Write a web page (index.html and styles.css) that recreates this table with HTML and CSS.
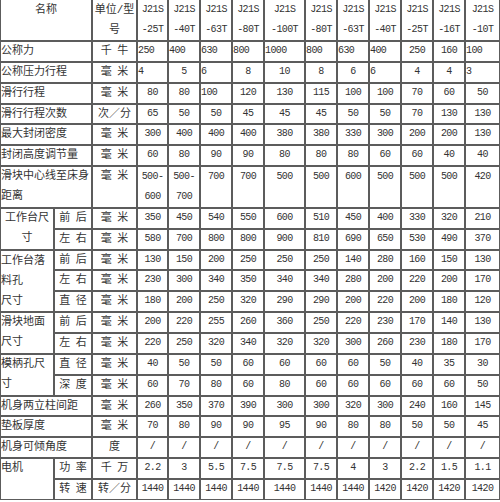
FILE: index.html
```html
<!DOCTYPE html>
<html lang="zh">
<head>
<meta charset="utf-8">
<title>J21S 技术参数</title>
<link rel="stylesheet" href="styles.css">
</head>
<body>
<table class="spec">
<colgroup>
<col class="w54"><col class="w38"><col class="w45"><col class="w31">
<col class="w32"><col class="w32"><col class="w32"><col class="w41">
<col class="w32"><col class="w32"><col class="w32"><col class="w32"><col class="w32"><col class="w35">
</colgroup>
<tr class="hd">
<th colspan="2" class="zh">名称</th><th class="zh">单位/型<br>号</th>
<th>J21S<br>-25T</th><th>J21S<br>-40T</th><th>J21S<br>-63T</th><th>J21S<br>-80T</th><th>J21S<br>-100T</th><th>J21S<br>-80T</th><th>J21S<br>-63T</th><th>J21S<br>-40T</th><th>J21S<br>-25T</th><th>J21S<br>-16T</th><th>J21S<br>-10T</th>
</tr>
<tr><td colspan="2" class="n">公称力</td><td class="zh">千&ensp;牛</td><td class="l">250</td><td class="l">400</td><td class="l">630</td><td class="l">800</td><td class="l">1000</td><td class="l">800</td><td class="l">630</td><td class="l">400</td><td>250</td><td>160</td><td class="l">100</td></tr>
<tr><td colspan="2" class="n">公称压力行程</td><td class="zh">毫&ensp;米</td><td class="l">4</td><td>5</td><td class="l">6</td><td>8</td><td>10</td><td>8</td><td>6</td><td class="l">6</td><td>4</td><td>4</td><td class="l">3</td></tr>
<tr><td colspan="2" class="n">滑行行程</td><td class="zh">毫&ensp;米</td><td>80</td><td>80</td><td class="l">100</td><td>120</td><td>130</td><td>115</td><td>100</td><td>100</td><td>70</td><td>60</td><td>50</td></tr>
<tr><td colspan="2" class="n">滑行行程次数</td><td class="zh">次／分</td><td>65</td><td>50</td><td>50</td><td>45</td><td>45</td><td>45</td><td>50</td><td>50</td><td>70</td><td>130</td><td>130</td></tr>
<tr><td colspan="2" class="n">最大封闭密度</td><td class="zh">毫&ensp;米</td><td>300</td><td>400</td><td>400</td><td>400</td><td>380</td><td>380</td><td>330</td><td>300</td><td>200</td><td>200</td><td>130</td></tr>
<tr><td colspan="2" class="n">封闭高度调节量</td><td class="zh">毫&ensp;米</td><td>60</td><td>80</td><td>90</td><td>90</td><td>80</td><td>80</td><td>80</td><td>60</td><td>60</td><td>40</td><td>40</td></tr>
<tr class="tall"><td colspan="2" class="n">滑块中心线至床身<br>距离</td><td class="zh">毫&ensp;米</td><td>500-<br>600</td><td>500-<br>700</td><td>700</td><td>700</td><td>500</td><td>500</td><td>600</td><td>500</td><td>500</td><td>500</td><td>420</td></tr>
<tr><td rowspan="2" class="n ctr rs2">工作台尺<br>寸</td><td class="zh">前&ensp;后</td><td class="zh">毫&ensp;米</td><td>350</td><td>450</td><td>540</td><td>550</td><td>600</td><td>510</td><td>450</td><td>400</td><td>330</td><td>320</td><td>210</td></tr>
<tr><td class="zh">左&ensp;右</td><td class="zh">毫&ensp;米</td><td>580</td><td>700</td><td>800</td><td>800</td><td>900</td><td>810</td><td>690</td><td>650</td><td>530</td><td>490</td><td>370</td></tr>
<tr><td rowspan="3" class="n rs3">工作台落<br>料孔<br>尺寸</td><td class="zh">前&ensp;后</td><td class="zh">毫&ensp;米</td><td>130</td><td>150</td><td>200</td><td>250</td><td>250</td><td>250</td><td>140</td><td>280</td><td>160</td><td>150</td><td>130</td></tr>
<tr><td class="zh">左&ensp;右</td><td class="zh">毫&ensp;米</td><td>230</td><td>300</td><td>340</td><td>350</td><td>340</td><td>340</td><td>280</td><td>200</td><td>220</td><td>200</td><td>170</td></tr>
<tr><td class="zh">直&ensp;径</td><td class="zh">毫&ensp;米</td><td>180</td><td>200</td><td>250</td><td>320</td><td>290</td><td>290</td><td>200</td><td>220</td><td>200</td><td>180</td><td>120</td></tr>
<tr><td rowspan="2" class="n rs2">滑块地面<br>尺寸</td><td class="zh">前&ensp;后</td><td class="zh">毫&ensp;米</td><td>200</td><td>220</td><td>255</td><td>260</td><td>360</td><td>250</td><td>220</td><td>230</td><td>170</td><td>140</td><td>130</td></tr>
<tr><td class="zh">左&ensp;右</td><td class="zh">毫&ensp;米</td><td>220</td><td>250</td><td>320</td><td>340</td><td>320</td><td>320</td><td>300</td><td>260</td><td>230</td><td>180</td><td>170</td></tr>
<tr><td rowspan="2" class="n rs2">模柄孔尺<br>寸</td><td class="zh">直&ensp;径</td><td class="zh">毫&ensp;米</td><td>40</td><td>50</td><td>50</td><td>60</td><td>60</td><td>60</td><td>60</td><td>50</td><td>40</td><td>35</td><td>30</td></tr>
<tr><td class="zh">深&ensp;度</td><td class="zh">毫&ensp;米</td><td>60</td><td>70</td><td>80</td><td>60</td><td>80</td><td>60</td><td>60</td><td>60</td><td>60</td><td>60</td><td>50</td></tr>
<tr><td colspan="2" class="n">机身两立柱间距</td><td class="zh">毫&ensp;米</td><td>260</td><td>350</td><td>370</td><td>390</td><td>300</td><td>300</td><td>320</td><td>300</td><td>240</td><td>160</td><td>145</td></tr>
<tr><td colspan="2" class="n">垫板厚度</td><td class="zh">毫&ensp;米</td><td>70</td><td>80</td><td>90</td><td>90</td><td>95</td><td>90</td><td>80</td><td>80</td><td>50</td><td>50</td><td>45</td></tr>
<tr><td colspan="2" class="n">机身可倾角度</td><td class="zh">度</td><td>/</td><td>/</td><td>/</td><td>/</td><td>/</td><td>/</td><td>/</td><td>/</td><td>/</td><td>/</td><td>/</td></tr>
<tr><td rowspan="2" class="n top">电机</td><td class="zh">功&ensp;率</td><td class="zh">千&ensp;万</td><td>2.2</td><td>3</td><td>5.5</td><td>7.5</td><td>7.5</td><td>7.5</td><td>4</td><td>3</td><td>2.2</td><td>1.5</td><td>1.1</td></tr>
<tr><td class="zh">转&ensp;速</td><td class="zh">转／分</td><td>1440</td><td>1440</td><td>1440</td><td>1440</td><td>1440</td><td>1440</td><td>1440</td><td>1420</td><td>1420</td><td>1420</td><td>1420</td></tr>
</table>
</body>
</html>
```
FILE: styles.css
```css
html, body {
  margin: 0;
  padding: 0;
  background: #ffffff;
}

.spec {
  border-collapse: separate;
  border-spacing: 0;
  table-layout: fixed;
  width: 500px;
  font-family: "Liberation Mono", "Noto Sans CJK SC", monospace;
  color: #333333;
}

.w54 { width: 54px; }
.w38 { width: 38px; }
.w45 { width: 45px; }
.w31 { width: 31px; }
.w32 { width: 32px; }
.w41 { width: 41px; }
.w35 { width: 35px; }

.spec td,
.spec th {
  border: 1px solid #5c5c5c;
  padding: 0;
  font-weight: normal;
  font-size: 10px;
  letter-spacing: -0.6px;
  line-height: 18.86px;
  text-align: center;
  vertical-align: middle;
  white-space: nowrap;
  overflow: hidden;
}

.spec .hd th {
  border-top: none;
  line-height: 20px;
  vertical-align: top;
}

.spec .zh {
  font-size: 11px;
  letter-spacing: 0;
}

.spec .n {
  font-size: 11px;
  letter-spacing: 0;
  text-align: left;
}

.spec .ctr {
  text-align: center;
}

.spec .l {
  text-align: left;
}

.spec .tall td {
  line-height: 19.86px;
  vertical-align: top;
}

.spec .rs2 {
  line-height: 19.8px;
}

.spec .rs3 {
  line-height: 20.1px;
}

.spec .top {
  vertical-align: top;
}
```
